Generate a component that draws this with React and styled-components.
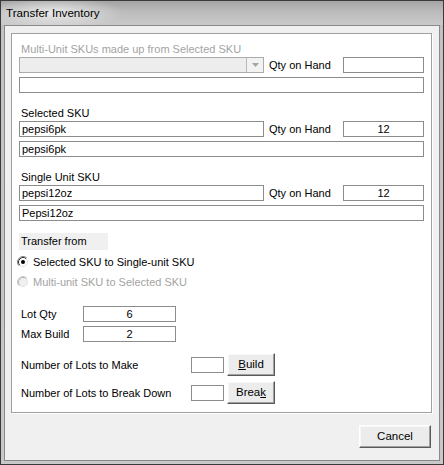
import React from "react";
import styled, { createGlobalStyle } from "styled-components";

const GlobalStyle = createGlobalStyle`
  html, body { margin: 0; padding: 0; background: #ffffff; overflow: hidden; }
  body { font-family: "Liberation Sans", Arial, sans-serif; }
  * { box-sizing: border-box; }
`;

const Window = styled.div`
  width: 444px;
  height: 465px;
  display: flex;
  flex-direction: column;
  border: 1px solid #3a3a3a;
  background: linear-gradient(180deg, #a9a9a9 0px, #c2c2c2 30px, #c8c8c8 100%);
`;

const TitleBar = styled.div`
  height: 24px;
  flex: none;
  display: flex;
  align-items: center;
  padding: 0 0 2px 5px;
  font-family: "Liberation Sans", Arial, sans-serif;
  font-size: 11.6px;
  color: #000;
  background:
    radial-gradient(ellipse 70px 16px at 52px 12px, rgba(235, 235, 235, 0.95), rgba(235, 235, 235, 0) 100%),
    linear-gradient(180deg, #a4a4a4 0%, #bcbcbc 45%, #c9c9c9 100%);
`;

const Client = styled.div`
  flex: 1;
  margin: 0 3px 3px;
  border: 1px solid #8a8a8a;
  background: #f0f0f0;
  display: flex;
  flex-direction: column;
  padding: 7px 7px 0 6px;
`;

const GroupBox = styled.div`
  width: 421px;
  height: 380px;
  border: 1px solid #a0a0a0;
  box-shadow: 1px 1px 0 #ffffff;
  background: #ffffff;
  padding: 7px 7px 0 7px;
  display: flex;
  flex-direction: column;
`;

const Block = styled.div`
  margin-top: ${(p) => p.$gap || 0}px;
  display: flex;
  flex-direction: column;
  gap: ${(p) => p.$inner || 0}px;
`;

const Section = styled.div`
  display: flex;
  flex-direction: column;
`;

const FieldLabel = styled.div`
  height: 16px;
  line-height: 16px;
  padding-left: 2px;
  font-size: 11px;
  color: ${(p) => (p.$disabled ? "#a3a3a3" : "#000")};
  white-space: nowrap;
`;

const SkuRow = styled.div`
  display: grid;
  grid-template-columns: 245px 1fr 81px;
  column-gap: 5px;
  align-items: center;
  height: 16px;
  margin-bottom: 4px;
`;

const TextBox = styled.input`
  width: ${(p) => (p.$w ? `${p.$w}px` : "100%")};
  height: 16px;
  margin: 0;
  border: 1px solid #8c8c8c;
  border-radius: 0;
  padding: 0 2px;
  background: #fff;
  font-family: "Liberation Sans", Arial, sans-serif;
  font-size: 11px;
  color: #000;
  text-align: ${(p) => p.$align || "left"};
  outline: none;
  flex: none;
`;

const ComboBox = styled.div`
  height: 16px;
  border: 1px solid #ababab;
  background: #ededed;
  display: flex;
  justify-content: flex-end;
`;

const ComboButton = styled.div`
  width: 17px;
  height: 100%;
  border-left: 1px solid #b8b8b8;
  background: #f2f2f2;
  display: flex;
  align-items: center;
  justify-content: center;
`;

const QtyLabel = styled.div`
  font-size: 11px;
  color: #000;
  white-space: nowrap;
`;

const TransferLabel = styled.div`
  width: 89px;
  height: 17px;
  line-height: 16px;
  padding-left: 2px;
  background: #f0f0f0;
  font-size: 11px;
  color: #000;
`;

const RadioRow = styled.div`
  height: 16px;
  display: flex;
  align-items: center;
  gap: 4px;
  margin-left: -2px;
  font-size: 11px;
  color: ${(p) => (p.$disabled ? "#a3a3a3" : "#000")};
  white-space: nowrap;
`;

const LotRow = styled.div`
  display: grid;
  grid-template-columns: 64px 93px;
  align-items: center;
  height: 16px;
`;

const ActionRow = styled.div`
  display: flex;
  align-items: center;
  height: 23px;
`;

const ActionLabel = styled.div`
  width: 172px;
  padding-left: 2px;
  font-size: 11px;
  color: #000;
  white-space: nowrap;
`;

const PushButton = styled.button`
  width: ${(p) => p.$w}px;
  height: 23px;
  margin: 0 0 0 ${(p) => p.$ml || 0}px;
  padding: 0 0 1px;
  border: 1px solid;
  border-color: #ffffff #5a5a5a #5a5a5a #ffffff;
  box-shadow: inset -1px -1px 0 #a0a0a0, inset 1px 1px 0 #f8f8f8;
  border-radius: 0;
  background: #ececec;
  font-family: "Liberation Sans", Arial, sans-serif;
  font-size: 11.5px;
  color: #000;
  flex: none;
  u { text-decoration: underline; text-underline-offset: 1px; }
`;

const Footer = styled.div`
  display: flex;
  justify-content: flex-end;
  padding-right: 1px;
  margin-top: 12px;
`;

const RadioGlyph = ({ checked, disabled }) => {
  const outerDark = disabled ? "#c8c8c8" : "#808080";
  const innerDark = disabled ? "#b4b4b4" : "#303030";
  return (
    <svg width="12" height="12" viewBox="0 0 12 12" style={{ flex: "none" }}>
      <circle cx="6" cy="6" r="5" fill={disabled ? "#f0f0f0" : "#fff"} />
      <path d="M2.11 9.89 A5.5 5.5 0 0 1 9.89 2.11" fill="none" stroke={outerDark} strokeWidth="1" />
      <path d="M2.82 9.18 A4.5 4.5 0 0 1 9.18 2.82" fill="none" stroke={innerDark} strokeWidth="1" />
      <path d="M9.89 2.11 A5.5 5.5 0 0 1 2.11 9.89" fill="none" stroke="#ffffff" strokeWidth="1" />
      <path d="M9.18 2.82 A4.5 4.5 0 0 1 2.82 9.18" fill="none" stroke="#e3e3e3" strokeWidth="1" />
      {checked && <circle cx="6" cy="6" r="2" fill="#000" />}
    </svg>
  );
};

const SkuSection = ({ label, disabled, sku, qty, desc, combo }) => (
  <Section>
    <FieldLabel $disabled={disabled}>{label}</FieldLabel>
    <SkuRow>
      {combo ? (
        <ComboBox>
          <ComboButton>
            <svg width="7" height="4" viewBox="0 0 7 4">
              <path d="M0 0 H7 L3.5 4 Z" fill="#a5a5a5" />
            </svg>
          </ComboButton>
        </ComboBox>
      ) : (
        <TextBox readOnly value={sku} />
      )}
      <QtyLabel>Qty on Hand</QtyLabel>
      <TextBox readOnly value={qty} $align="center" />
    </SkuRow>
    <TextBox readOnly value={desc} />
  </Section>
);

export default function App() {
  return (
    <>
      <GlobalStyle />
      <Window>
        <TitleBar>Transfer Inventory</TitleBar>
        <Client>
          <GroupBox>
            <Block $inner={12}>
              <SkuSection
                label="Multi-Unit SKUs made up from Selected SKU"
                disabled
                combo
                qty=""
                desc=""
              />
              <SkuSection label="Selected SKU" sku="pepsi6pk" qty="12" desc="pepsi6pk" />
              <SkuSection label="Single Unit SKU" sku="pepsi12oz" qty="12" desc="Pepsi12oz" />
            </Block>
            <Block $gap={12} $inner={4}>
              <TransferLabel>Transfer from</TransferLabel>
              <RadioRow>
                <RadioGlyph checked />
                Selected SKU to Single-unit SKU
              </RadioRow>
              <RadioRow $disabled>
                <RadioGlyph disabled />
                Multi-unit SKU to Selected SKU
              </RadioRow>
            </Block>
            <Block $gap={16} $inner={4}>
              <LotRow>
                <FieldLabel>Lot Qty</FieldLabel>
                <TextBox readOnly value="6" $align="center" />
              </LotRow>
              <LotRow>
                <FieldLabel>Max Build</FieldLabel>
                <TextBox readOnly value="2" $align="center" />
              </LotRow>
            </Block>
            <Block $gap={11} $inner={5}>
              <ActionRow>
                <ActionLabel>Number of Lots to Make</ActionLabel>
                <TextBox readOnly value="" $w={33} />
                <PushButton $w={48} $ml={3}>
                  <u>B</u>uild
                </PushButton>
              </ActionRow>
              <ActionRow>
                <ActionLabel>Number of Lots to Break Down</ActionLabel>
                <TextBox readOnly value="" $w={33} />
                <PushButton $w={48} $ml={3}>
                  Brea<u>k</u>
                </PushButton>
              </ActionRow>
            </Block>
          </GroupBox>
          <Footer>
            <PushButton $w={72}>Cancel</PushButton>
          </Footer>
        </Client>
      </Window>
    </>
  );
}
